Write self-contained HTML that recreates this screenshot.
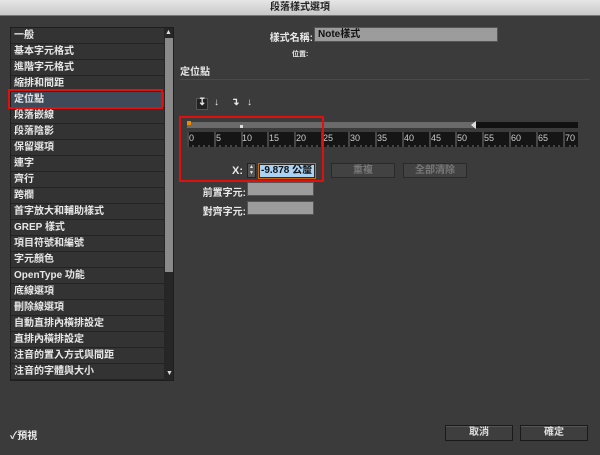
<!DOCTYPE html>
<html><head><meta charset="utf-8"><style>
*{margin:0;padding:0;box-sizing:border-box}
body{width:600px;height:455px;background:#3b3b3b;font-family:"Liberation Sans","Noto Sans CJK TC",sans-serif;color:#e8e8e8;font-size:10px;position:relative;overflow:hidden;font-weight:bold}
.a{position:absolute}
.title{left:0;top:0;width:600px;height:16px;background:linear-gradient(#e6e6e6,#c8c8c8);color:#222;text-align:center;font-size:10px;line-height:16px;border-bottom:1px solid #777}
.list{left:10px;top:27px;width:164px;height:354px;background:#2e2e2e;border:1px solid #1e1e1e}
.row{height:16px;line-height:16px;padding-left:3px;border-bottom:1px solid #232323;font-size:10px;width:153px;background:#333}
.sel{background:#3f4a58}
.sb{left:164px;top:28px;width:9px;height:352px;background:#262626}
.thumb{left:165px;top:38px;width:8px;height:234px;background:#8a8a8a}
.red{border:2px solid #e01010}
.inp{background:#9c9c9c;border:1px solid #555}
.btn{background:#424242;border:1px solid #2a2a2a;color:#777;text-align:center;line-height:13px;font-size:10px}
.btn2{background:#3e3e3e;border:1px solid #1a1a1a;color:#ddd;text-align:center;line-height:14px;font-size:10px;box-shadow:inset 0 1px 0 #555}
.lbl{font-size:10px;text-align:right}
</style></head><body>
<div class="a title">段落樣式選項</div>
<div class="a list">
<div class="row">一般</div>
<div class="row">基本字元格式</div>
<div class="row">進階字元格式</div>
<div class="row">縮排和間距</div>
<div class="row sel">定位點</div>
<div class="row">段落嵌線</div>
<div class="row">段落陰影</div>
<div class="row">保留選項</div>
<div class="row">連字</div>
<div class="row">齊行</div>
<div class="row">跨欄</div>
<div class="row">首字放大和輔助樣式</div>
<div class="row">GREP 樣式</div>
<div class="row">項目符號和編號</div>
<div class="row">字元顏色</div>
<div class="row">OpenType 功能</div>
<div class="row">底線選項</div>
<div class="row">刪除線選項</div>
<div class="row">自動直排內橫排設定</div>
<div class="row">直排內橫排設定</div>
<div class="row">注音的置入方式與間距</div>
<div class="row">注音的字體與大小</div>
</div>
<div class="a sb"></div>
<div class="a thumb"></div>
<div class="a" style="left:165px;top:29px;font-size:7px;color:#ddd">▲</div>
<div class="a" style="left:166px;top:370px;font-size:7px;color:#ddd">▼</div>
<div class="a red" style="left:8px;top:89px;width:155px;height:20px"></div>

<div class="a lbl" style="left:230px;top:29px;width:83px">樣式名稱:</div>
<div class="a inp" style="left:314px;top:27px;width:184px;height:15px;color:#111;font-size:10px;padding-left:3px;line-height:14px">Note樣式</div>
<div class="a" style="left:292px;top:49px;font-size:7px">位置:</div>
<div class="a" style="left:180px;top:63px;font-size:10px">定位點</div>
<div class="a" style="left:180px;top:79px;width:410px;height:1px;background:#4a4a4a"></div>

<div class="a" style="left:196px;top:98px;width:12px;height:12px;background:#222;border:1px solid #555"></div>
<div class="a" style="left:198px;top:97px;font-size:10px">↧</div>
<div class="a" style="left:214px;top:97px;font-size:10px">↓</div>
<div class="a" style="left:231px;top:97px;font-size:10px">↴</div>
<div class="a" style="left:247px;top:97px;font-size:10px">↓</div>

<div class="a" style="left:187px;top:122px;width:288px;height:6px;background:#6a6a6a"></div>
<div class="a" style="left:475px;top:122px;width:103px;height:6px;background:#111"></div>
<div class="a" style="left:187px;top:121px;width:4px;height:4px;background:#f08a00"></div>
<div class="a" style="left:240px;top:125px;width:3px;height:3px;background:#ddd"></div>
<div class="a" style="left:471px;top:121px;width:0;height:0;border-top:4px solid transparent;border-bottom:4px solid transparent;border-right:5px solid #ddd"></div>
<svg class="a" style="left:187px;top:132px" width="391" height="15">
<rect width="391" height="15" fill="#151515"/>
<g fill="#ccc" font-family="Liberation Sans" font-size="9" font-weight="normal">
<text x="2" y="9">0</text><text x="29" y="9">5</text><text x="55" y="9">10</text><text x="82" y="9">15</text><text x="109" y="9">20</text><text x="136" y="9">25</text><text x="163" y="9">30</text><text x="190" y="9">35</text><text x="217" y="9">40</text><text x="244" y="9">45</text><text x="270" y="9">50</text><text x="297" y="9">55</text><text x="324" y="9">60</text><text x="351" y="9">65</text><text x="378" y="9">70</text>
</g>
<g stroke="#777" stroke-width="1">
<path d="M1 0V15M28 0V15M55 0V15M81 0V15M108 0V15M135 0V15M162 0V15M189 0V15M216 0V15M243 0V15M269 0V15M296 0V15M323 0V15M350 0V15M377 0V15"/>
<path d="M6 13V15M12 13V15M17 13V15M22 13V15M33 13V15M39 13V15M44 13V15M49 13V15M60 13V15M66 13V15M71 13V15M76 13V15M87 13V15M93 13V15M98 13V15M103 13V15M114 13V15M120 13V15M125 13V15M130 13V15M141 13V15M147 13V15M152 13V15M157 13V15M168 13V15M174 13V15M179 13V15M184 13V15M195 13V15M201 13V15M206 13V15M211 13V15M222 13V15M228 13V15M233 13V15M238 13V15M249 13V15M255 13V15M260 13V15M265 13V15M275 13V15M281 13V15M286 13V15M291 13V15M302 13V15M308 13V15M313 13V15M318 13V15M329 13V15M335 13V15M340 13V15M345 13V15M356 13V15M362 13V15M367 13V15M372 13V15M383 13V15M388 13V15"/>
</g></svg>
<div class="a red" style="left:179px;top:116px;width:145px;height:66px"></div>

<div class="a" style="left:232px;top:165px;font-size:11px">X:</div>
<div class="a" style="left:247px;top:163px;width:9px;height:15px;background:#555;border:1px solid #222;font-size:5px;line-height:6px;text-align:center">▲<br>▼</div>
<div class="a" style="left:258px;top:163px;width:58px;height:16px;border:1px solid #c56a10;background:#2a2a2a;padding:1px"><div style="background:#a9d2f5;color:#111;height:12px;line-height:12px;font-size:10px;white-space:nowrap;overflow:hidden;padding-left:1px">-9.878 公釐</div></div>
<div class="a btn" style="left:331px;top:163px;width:64px;height:15px">重複</div>
<div class="a btn" style="left:403px;top:163px;width:64px;height:15px">全部清除</div>
<div class="a lbl" style="left:190px;top:184px;width:56px">前置字元:</div>
<div class="a inp" style="left:247px;top:182px;width:67px;height:14px"></div>
<div class="a lbl" style="left:190px;top:203px;width:56px">對齊字元:</div>
<div class="a inp" style="left:247px;top:201px;width:67px;height:14px"></div>

<div class="a" style="left:10px;top:427px;font-size:10px">✓預視</div>
<div class="a btn2" style="left:445px;top:425px;width:68px;height:16px">取消</div>
<div class="a btn2" style="left:520px;top:425px;width:68px;height:16px">確定</div>
</body></html>
